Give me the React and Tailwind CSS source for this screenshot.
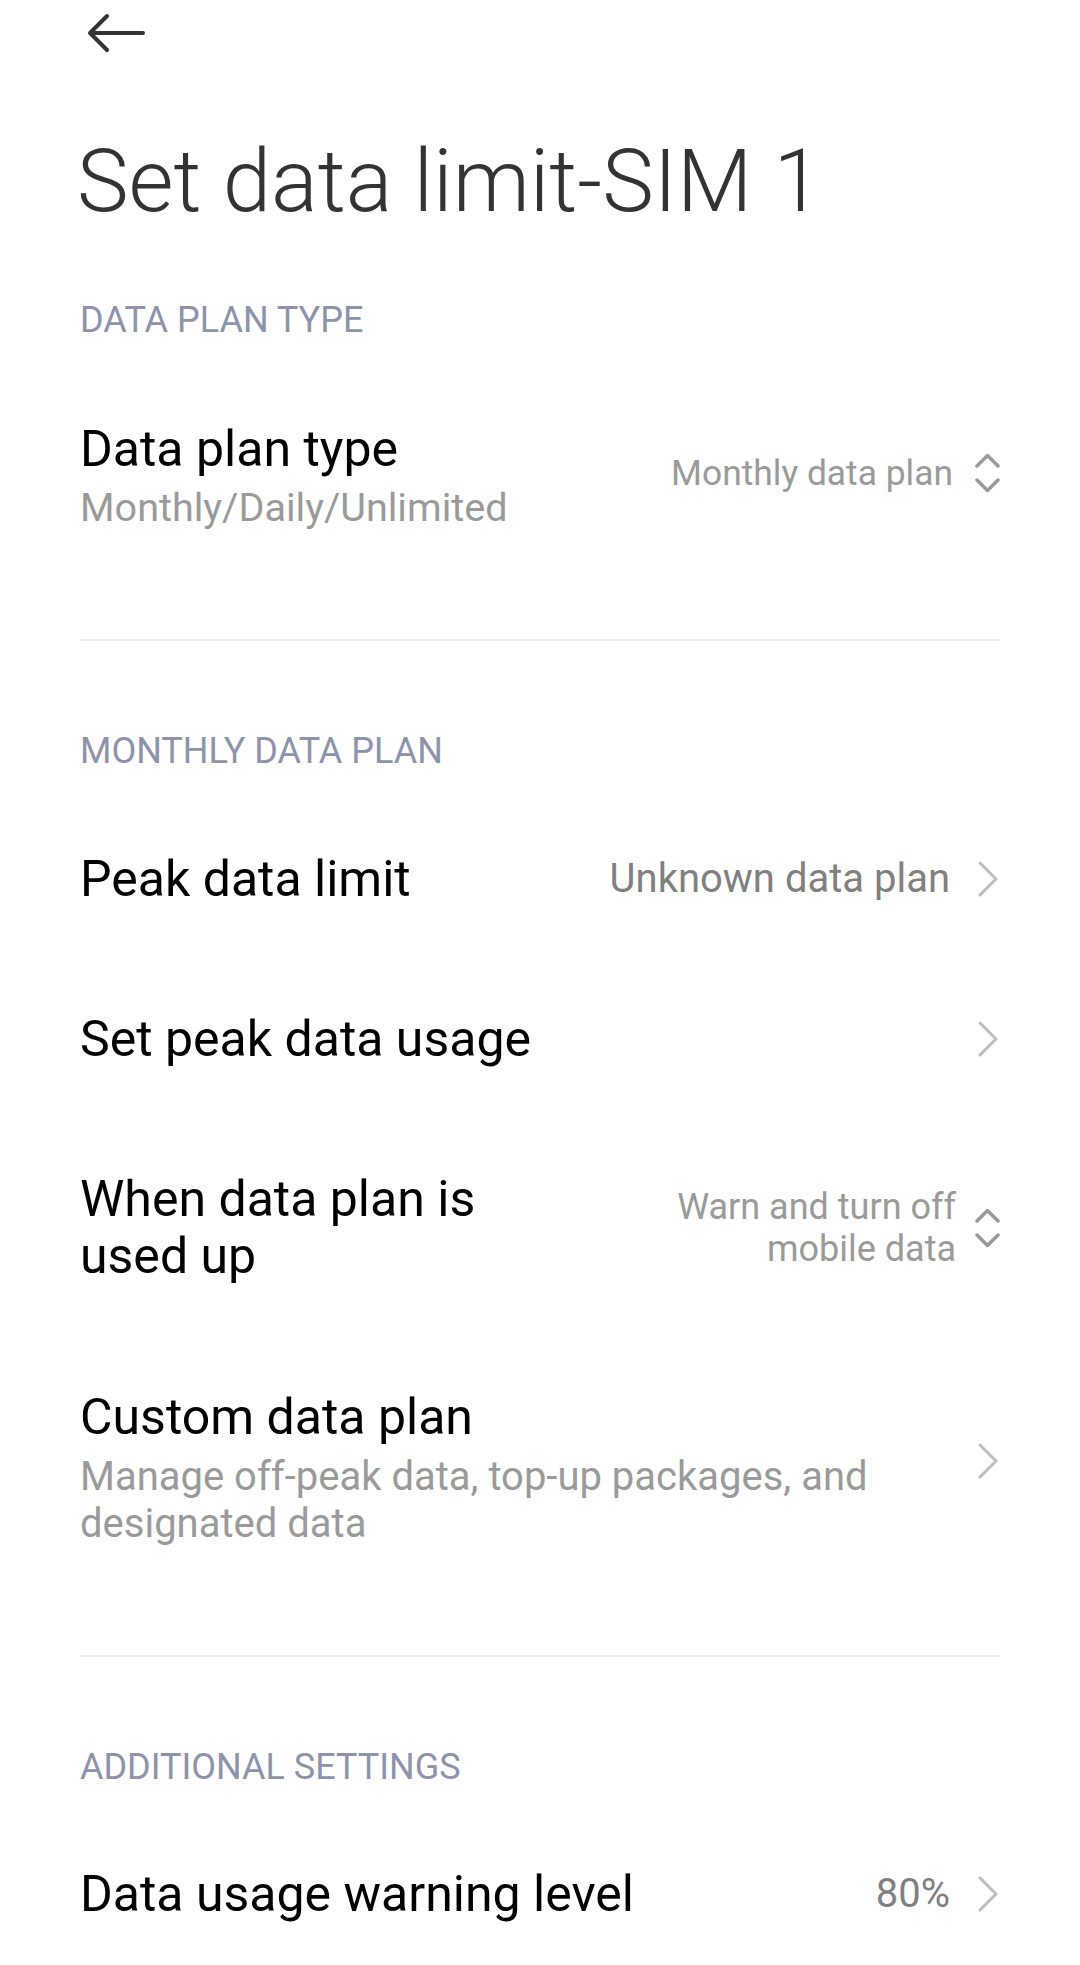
import React from "react";

function ChevronRight({ className = "" }) {
  return (
    <svg width="24" height="36" viewBox="0 0 24 36" fill="none" className={"shrink-0 " + className}>
      <path d="M4 2 L20 18 L4 34" stroke="#bdbdbd" strokeWidth="3" strokeLinecap="round" strokeLinejoin="round" />
    </svg>
  );
}

function UpDown() {
  return (
    <svg width="28" height="44" viewBox="0 0 28 44" fill="none" className="shrink-0">
      <path d="M5 15 L15.5 4.5 L26 15" stroke="#9a9a9a" strokeWidth="3.5" strokeLinecap="round" strokeLinejoin="round" />
      <path d="M5 29 L15.5 39.5 L26 29" stroke="#9a9a9a" strokeWidth="3.5" strokeLinecap="round" strokeLinejoin="round" />
    </svg>
  );
}

export default function App() {
  return (
    <div className="w-[1080px] min-h-[1965px] bg-white font-['Roboto','Noto_Sans',sans-serif] px-[80px] flex flex-col">
      {/* header */}
      <div className="pt-[12px] pl-[6px] h-[54px]">
        <svg width="60" height="42" viewBox="0 0 60 42" fill="none">
          <path d="M57 21 H4 M21 4 L4 21 L21 38" stroke="#333333" strokeWidth="4" strokeLinecap="round" strokeLinejoin="round" />
        </svg>
      </div>

      {/* title */}
      <h1 className="mt-[84px] ml-[-3px] text-[87px] leading-none font-light text-[#333333]">
        Set data limit-SIM 1
      </h1>

      {/* section 1 */}
      <div className="mt-[77px] text-[36px] leading-none text-[#8d93ab]">DATA PLAN TYPE</div>

      <div className="mt-[86px] flex items-center justify-between">
        <div className="flex flex-col">
          <div className="text-[50px] leading-none text-black">Data plan type</div>
          <div className="mt-[14px] text-[39.6px] leading-none text-[#9a9a9a]">Monthly/Daily/Unlimited</div>
        </div>
        <div className="mb-[5px] flex items-center gap-[19px]">
          <span className="text-[35.4px] leading-none text-[#9a9a9a]">Monthly data plan</span>
          <UpDown />
        </div>
      </div>

      <div className="mt-[111px] h-[2px] bg-[#ececec]" />

      {/* section 2 */}
      <div className="mt-[92px] text-[36px] leading-none text-[#8d93ab]">MONTHLY DATA PLAN</div>

      <div className="mt-[85px] flex items-center justify-between">
        <div className="text-[50px] leading-none text-black">Peak data limit</div>
        <div className="flex items-center gap-[26px]">
          <span className="text-[40px] leading-none text-[#808080]">Unknown data plan</span>
          <ChevronRight />
        </div>
      </div>

      <div className="mt-[110px] flex items-center justify-between">
        <div className="text-[50px] leading-none text-black">Set peak data usage</div>
        <ChevronRight />
      </div>

      <div className="mt-[107px] flex items-center justify-between">
        <div className="text-[50px] leading-[57px] text-black">
          When data plan is
          <br />
          used up
        </div>
        <div className="flex items-center gap-[16px]">
          <span className="text-[36px] leading-[42px] text-[#9a9a9a] text-right">
            Warn and turn off
            <br />
            mobile data
          </span>
          <UpDown />
        </div>
      </div>

      <div className="mt-[107px] flex items-center justify-between">
        <div className="flex flex-col">
          <div className="text-[50px] leading-none text-black">Custom data plan</div>
          <div className="mt-[11px] text-[40px] leading-[47px] text-[#9a9a9a]">
            Manage off-peak data, top-up packages, and
            <br />
            designated data
          </div>
        </div>
        <ChevronRight className="mb-[16px]" />
      </div>

      <div className="mt-[108px] h-[2px] bg-[#ececec]" />

      {/* section 3 */}
      <div className="mt-[92px] text-[36px] leading-none text-[#8d93ab]">ADDITIONAL SETTINGS</div>

      <div className="mt-[84px] flex items-center justify-between">
        <div className="text-[50px] leading-none text-black">Data usage warning level</div>
        <div className="flex items-center gap-[26px]">
          <span className="text-[40px] leading-none text-[#808080]">80%</span>
          <ChevronRight />
        </div>
      </div>
    </div>
  );
}
